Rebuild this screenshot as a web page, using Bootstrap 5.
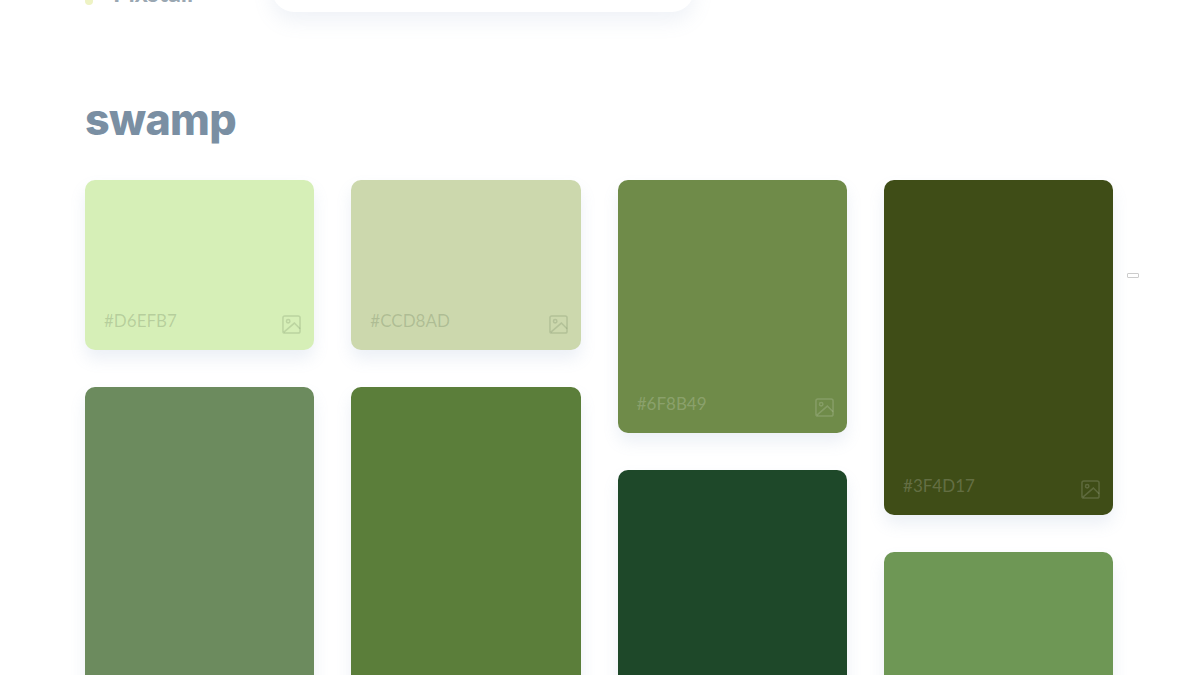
<!DOCTYPE html>
<html lang="en">
<head>
    <meta charset="UTF-8">
    <title>swamp</title>
    <link href="https://cdn.jsdelivr.net/npm/bootstrap@5.3.0/dist/css/bootstrap.min.css" rel="stylesheet">
    <style>
        html, body { height: 675px; overflow: hidden; }
        body { background: #fff; font-family: "Lato", sans-serif; }
        .page-wrap { padding: 0 85px; }
        .top-bar { height: 60px; margin-top: -48px; }
        .logo-dot { width: 8px; height: 8px; background: #eef3c4; margin: 0 20px 7px 0; }
        .logo-name { font-size: 25px; line-height: 30px; color: #9aa7b2; width: 159px; margin-bottom: 5px; }
        .search-box { width: 422px; height: 60px; border-radius: 0 0 22px 22px; box-shadow: 0 9px 20px rgba(120,150,190,.12); }
        .palette-title { font-family: "Inter", sans-serif; font-weight: 800; font-size: 43px; line-height: 50px; letter-spacing: -.6px; color: #7a8fa3; margin: 82px 0 0 0; }
        .palette-cols { width: 1029px; gap: 37.1px; margin-top: 36px; }
        .swatch-col { width: 229.25px; gap: 37px; }
        .swatch { height: var(--h); border-radius: 10px; box-shadow: 0 9px 16px rgba(120,150,190,.14); color: rgba(255,255,255,.2); padding: 0 13px 16px 19px; }
        .swatch-light { color: rgba(70,90,60,.22); }
        .swatch svg { opacity: .8; }
        .hex-label { font-size: 17px; line-height: 22px; margin-bottom: 2px; }
        .side-mark { position: fixed; left: 1127px; top: 273px; width: 12px; height: 5px; border: 1px solid #ccc; border-radius: 1px; }
    </style>
</head>
<body>
    <div class="page-wrap">
        <!-- Header, scrolled mostly out of view -->
        <div class="top-bar d-flex align-items-end">
            <span class="logo-dot rounded-circle"></span>
            <span class="logo-name fw-bold">Pixstall</span>
            <div class="search-box bg-white"></div>
        </div>

        <h1 class="palette-title">swamp</h1>

        <div class="palette-cols d-flex align-items-start">
            <div class="swatch-col d-flex flex-column">
                <div class="swatch swatch-light d-flex justify-content-between align-items-end" style="--h:170px;background:#D6EFB7">
                    <span class="hex-label">#D6EFB7</span>
                    <svg width="19" height="19" viewBox="0 0 20 20" fill="none" stroke="currentColor" stroke-width="1.6"><rect x="1" y="1" width="18" height="18" rx="2"/><circle cx="6.5" cy="6.5" r="1.800"/><path d="M2 18L13 8.500l6 6"/></svg>
                </div>
                <div class="swatch" style="--h:400px;background:#6C8B5E"></div>
            </div>
            <div class="swatch-col d-flex flex-column">
                <div class="swatch swatch-light d-flex justify-content-between align-items-end" style="--h:170px;background:#CCD8AD">
                    <span class="hex-label">#CCD8AD</span>
                    <svg width="19" height="19" viewBox="0 0 20 20" fill="none" stroke="currentColor" stroke-width="1.6"><rect x="1" y="1" width="18" height="18" rx="2"/><circle cx="6.5" cy="6.5" r="1.800"/><path d="M2 18L13 8.500l6 6"/></svg>
                </div>
                <div class="swatch" style="--h:400px;background:#5B7E3A"></div>
            </div>
            <div class="swatch-col d-flex flex-column">
                <div class="swatch d-flex justify-content-between align-items-end" style="--h:253px;background:#6F8B49">
                    <span class="hex-label">#6F8B49</span>
                    <svg width="19" height="19" viewBox="0 0 20 20" fill="none" stroke="currentColor" stroke-width="1.6"><rect x="1" y="1" width="18" height="18" rx="2"/><circle cx="6.5" cy="6.5" r="1.800"/><path d="M2 18L13 8.500l6 6"/></svg>
                </div>
                <div class="swatch" style="--h:317px;background:#1E4829"></div>
            </div>
            <div class="swatch-col d-flex flex-column">
                <div class="swatch d-flex justify-content-between align-items-end" style="--h:335px;background:#3F4D17">
                    <span class="hex-label">#3F4D17</span>
                    <svg width="19" height="19" viewBox="0 0 20 20" fill="none" stroke="currentColor" stroke-width="1.6"><rect x="1" y="1" width="18" height="18" rx="2"/><circle cx="6.5" cy="6.5" r="1.800"/><path d="M2 18L13 8.500l6 6"/></svg>
                </div>
                <div class="swatch" style="--h:234px;background:#6E9755"></div>
            </div>
        </div>
    </div>
    <div class="side-mark"></div>
</body>
</html>
